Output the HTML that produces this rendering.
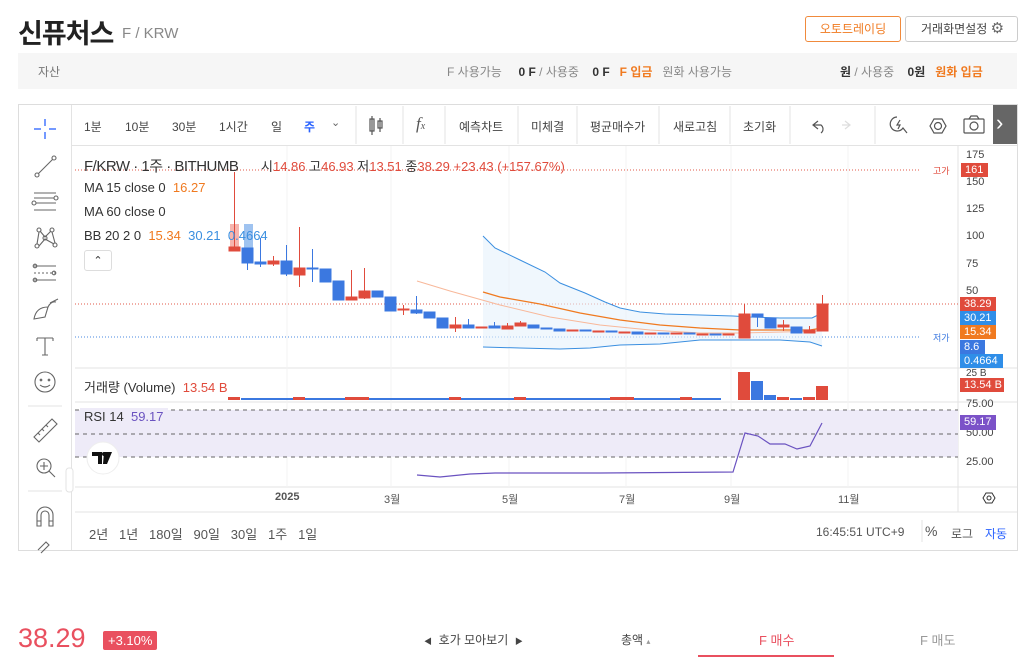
<!DOCTYPE html>
<html><head><meta charset="utf-8">
<style>
*{margin:0;padding:0;box-sizing:border-box}
body{width:1033px;height:657px;background:#fff;font-family:"Liberation Sans","Noto Sans CJK KR",sans-serif;position:relative;overflow:hidden;color:#333}
.a{position:absolute;white-space:nowrap}
</style></head><body>
<div class="a" style="left:18px;top:12px;font-size:27px;font-weight:bold;color:#222;letter-spacing:-1px">신퓨처스</div>
<div class="a" style="left:122px;top:25px;font-size:15px;color:#888">F / KRW</div>
<div class="a" style="left:805px;top:16px;width:96px;height:26px;border:1px solid #f08a3c;border-radius:3px;color:#f07a20;font-size:12px;text-align:center;line-height:24px">오토트레이딩</div>
<div class="a" style="left:905px;top:16px;width:113px;height:26px;border:1px solid #ccc;border-radius:3px;color:#444;font-size:12px;line-height:24px;padding-left:15px">거래화면설정 <span style="font-size:15px;color:#666">⚙</span></div>
<div class="a" style="left:18px;top:53px;width:999px;height:36px;background:#f6f6f6"></div>
<div class="a" style="left:38px;top:63px;font-size:12px;color:#777">자산</div>
<div class="a" style="left:447px;top:63px;font-size:12px;color:#888">F 사용가능 &nbsp;&nbsp;&nbsp;&nbsp;<b style="color:#333">0 F</b> / 사용중 &nbsp;&nbsp;&nbsp;<b style="color:#333">0 F</b> &nbsp;&nbsp;<b style="color:#f07a20">F 입금</b> &nbsp;&nbsp;원화 사용가능</div>
<div class="a" style="left:840px;top:63px;font-size:12px;color:#888"><b style="color:#333">원</b> / 사용중 &nbsp;&nbsp;&nbsp;<b style="color:#333">0원</b> &nbsp;&nbsp;<b style="color:#f07a20">원화 입금</b></div>

<div class="a" style="left:18px;top:104px;width:1000px;height:447px;border:1px solid #ddd"></div>
<div class="a" style="left:71px;top:105px;width:1px;height:445px;background:#e3e3e3"></div>
<div class="a" style="left:72px;top:145px;width:945px;height:1px;background:#e3e3e3"></div>
<div class="a" style="left:993px;top:105px;width:24px;height:39px;background:#666;color:#fff;font-size:22px;line-height:36px;padding-left:3px">›</div>
<div class="a" style="top:118px;left:84px;font-size:12px;color:#444">1분</div>
<div class="a" style="top:118px;left:125px;font-size:12px;color:#444">10분</div>
<div class="a" style="top:118px;left:172px;font-size:12px;color:#444">30분</div>
<div class="a" style="top:118px;left:219px;font-size:12px;color:#444">1시간</div>
<div class="a" style="top:118px;left:271px;font-size:12px;color:#444">일</div>
<div class="a" style="top:118px;left:304px;font-size:12px;color:#2962ff;font-weight:bold">주</div>
<div class="a" style="top:116px;left:331px;font-size:11px;color:#666">⌄</div>
<div class="a" style="top:118px;left:459px;font-size:12px;color:#444">예측차트</div>
<div class="a" style="top:118px;left:531px;font-size:12px;color:#444">미체결</div>
<div class="a" style="top:118px;left:590px;font-size:12px;color:#444">평균매수가</div>
<div class="a" style="top:118px;left:673px;font-size:12px;color:#444">새로고침</div>
<div class="a" style="top:118px;left:743px;font-size:12px;color:#444">초기화</div>
<div class="a" style="top:114px;left:416px;font-size:17px;color:#555;font-style:italic;font-family:'Liberation Serif',serif">f<span style="font-size:10px">x</span></div>

<svg class="a" style="left:0;top:0" width="1033" height="657" viewBox="0 0 1033 657">
<g stroke="#e3e3e3" stroke-width="1" fill="none">
<line x1="356" y1="106" x2="356" y2="144"/><line x1="403" y1="106" x2="403" y2="144"/><line x1="445" y1="106" x2="445" y2="144"/>
<line x1="518" y1="106" x2="518" y2="144"/><line x1="577" y1="106" x2="577" y2="144"/><line x1="659" y1="106" x2="659" y2="144"/><line x1="730" y1="106" x2="730" y2="144"/><line x1="790" y1="106" x2="790" y2="144"/><line x1="875" y1="106" x2="875" y2="144"/>
<line x1="958" y1="146" x2="958" y2="512"/>
<line x1="75" y1="368" x2="1017" y2="368"/><line x1="75" y1="402" x2="1017" y2="402"/><line x1="75" y1="487" x2="1017" y2="487"/><line x1="75" y1="512" x2="1017" y2="512"/>
<line x1="28" y1="406" x2="62" y2="406"/><line x1="28" y1="491" x2="62" y2="491"/>
</g>
<g stroke="#f3f3f3"><line x1="287" y1="146" x2="287" y2="487"/><line x1="391" y1="146" x2="391" y2="487"/><line x1="509" y1="146" x2="509" y2="487"/><line x1="626" y1="146" x2="626" y2="487"/><line x1="731" y1="146" x2="731" y2="487"/><line x1="848" y1="146" x2="848" y2="487"/></g>
<g stroke="#555" stroke-width="1.2" fill="none">
<rect x="370" y="119" width="4" height="12"/><line x1="372" y1="116" x2="372" y2="135"/><rect x="378" y="121" width="4" height="7"/><line x1="380" y1="118" x2="380" y2="132"/>
<path d="M818 121 l-5 4 l5 4 M813 125 h8 a5 5 0 0 1 0 8"/>
<path d="M897 117 a7 7 0 1 0 6 11 l4 5"/><path d="M900 120 l-3 5 h3 l-2 4"/>
<path d="M930 126 l4-7 h8 l4 7 l-4 7 h-8z"/><circle cx="938" cy="126" r="3.5"/>
<rect x="964" y="119" width="20" height="14" rx="1"/><path d="M969 119 l2-3 h6 l2 3"/><circle cx="974" cy="126" r="4"/>
</g>
<path d="M845 121 l5 4 l-5 4 M850 125 h-8" stroke="#ddd" stroke-width="1.2" fill="none"/>
<g stroke="#2962ff" stroke-width="1.3"><line x1="34" y1="129" x2="41" y2="129"/><line x1="49" y1="129" x2="56" y2="129"/><line x1="45" y1="119" x2="45" y2="126"/><line x1="45" y1="132" x2="45" y2="139"/></g>
<g stroke="#666" stroke-width="1.1" fill="none">
<circle cx="37" cy="175" r="2"/><circle cx="54" cy="158" r="2"/><line x1="38.5" y1="173.5" x2="52.5" y2="159.5"/>
<line x1="34" y1="193" x2="56" y2="193"/><line x1="34" y1="198" x2="54" y2="198"/><circle cx="56" cy="198" r="2"/><line x1="36" y1="203" x2="56" y2="203"/><circle cx="34" cy="203" r="2"/><line x1="34" y1="210" x2="56" y2="210"/>
<circle cx="39" cy="230" r="2"/><circle cx="52" cy="230" r="2"/><circle cx="37" cy="246" r="2"/><circle cx="55" cy="245" r="2"/><circle cx="45" cy="238" r="2"/><path d="M39 232 l-2 12 M52 232 l3 11 M40 231 l5 6 l6-6 M39 246 l6-7 l9 5"/>
<line x1="34" y1="266" x2="56" y2="266"/><line x1="34" y1="273" x2="56" y2="273" stroke-dasharray="2 2"/><line x1="34" y1="280" x2="56" y2="280"/><circle cx="35" cy="266" r="1.8"/><circle cx="54" cy="273" r="1.8"/><circle cx="35" cy="280" r="1.8"/>
<path d="M34 319 q2-12 14-12 l-3 10 z M48 307 q3-6 8-5 M50 303 l8 -4"/>
<path d="M37 338 h16 M45 338 v17 M37 338 v3 M53 338 v3 M42 355 h6"/>
<circle cx="45" cy="382" r="10"/><circle cx="41" cy="380" r="0.8"/><circle cx="49" cy="380" r="0.8"/><path d="M40 385 q5 4 10 0"/>
<path d="M34 437 l18-18 l5 5 l-18 18z M38 433 l2 2 M42 429 l2 2 M46 425 l2 2"/>
<circle cx="44" cy="466" r="7"/><path d="M44 462 v8 M40 466 h8 M49 471 l6 6"/>
<path d="M37 526 v-11 a8 8 0 0 1 16 0 v11 h-4 v-11 a4 4 0 0 0 -8 0 v11 z M37 521 h4 M49 521 h4"/>
<path d="M38 550 l8-8 l3 3 l-8 8"/>
</g>
<rect x="66" y="468" width="7" height="24" rx="3" fill="#fff" stroke="#e3e3e3"/>
<line x1="75" y1="170" x2="920" y2="170" stroke="#e05a4a" stroke-dasharray="1 2"/>
<line x1="75" y1="304" x2="958" y2="304" stroke="#e05a4a" stroke-dasharray="1 2"/>
<line x1="75" y1="337" x2="920" y2="337" stroke="#4a8ae0" stroke-dasharray="1 2"/>
<path d="M483 236 L495 248 L520 260 L545 272 L560 283 L585 293 L605 302 L620 308 L640 312 L665 314 L700 315 L733 316 L750 317 L780 318 L812 318 L822 313 L822 346 L810 342 L780 340 L740 340 L700 340 L660 344 L620 345 L590 348 L560 349 L520 348 L483 347 Z" fill="#e6f2fb" opacity="0.6"/>
<path d="M483 236 L495 248 L520 260 L545 272 L560 283 L585 293 L605 302 L620 308 L640 312 L665 314 L700 315 L733 316 L750 317 L780 318 L812 318 L822 313" stroke="#3b8fe0" fill="none"/>
<path d="M483 347 L520 348 L560 349 L590 348 L620 345 L660 344 L700 340 L740 340 L780 340 L810 342 L822 346" stroke="#3b8fe0" fill="none"/>
<path d="M417 281 L450 291 L500 305 L550 317 L600 325 L650 330 L700 333 L740 333 L822 331" stroke="#f8b89a" fill="none"/>
<path d="M483 292 L500 297 L540 304 L580 313 L620 320 L660 325 L700 328 L740 330 L810 330 L822 328" stroke="#f07a20" fill="none" stroke-width="1.3"/>
<rect x="230" y="224" width="9" height="26" fill="#f6b5ae"/><rect x="244" y="224" width="9" height="25" fill="#9fc3f0"/>
<g stroke-width="1">
<g stroke="#e04b3c" fill="#e04b3c">
<line x1="234.5" y1="172" x2="234.5" y2="251"/><rect x="229" y="247" width="11" height="4"/>
<line x1="273.5" y1="256" x2="273.5" y2="266"/><rect x="268" y="261" width="11" height="3"/>
<line x1="299.5" y1="227" x2="299.5" y2="287"/><rect x="294" y="268" width="11" height="7"/>
<line x1="351.5" y1="270" x2="351.5" y2="300"/><rect x="346" y="297" width="11" height="3"/>
<line x1="364.5" y1="268" x2="364.5" y2="299"/><rect x="359" y="291" width="11" height="7"/>
<line x1="403.5" y1="305" x2="403.5" y2="315"/><rect x="398" y="309" width="11" height="1"/>
<line x1="455.5" y1="317" x2="455.5" y2="332"/><rect x="450" y="325" width="11" height="3"/>
<rect x="476" y="327" width="11" height="1"/>
<line x1="507.5" y1="323" x2="507.5" y2="329"/><rect x="502" y="326" width="11" height="3"/>
<line x1="520.5" y1="321" x2="520.5" y2="326"/><rect x="515" y="323" width="11" height="3"/>
<rect x="567" y="330" width="11" height="1"/><rect x="593" y="331" width="11" height="1"/><rect x="619" y="332" width="11" height="1"/><rect x="645" y="333" width="11" height="1"/><rect x="671" y="333" width="11" height="1"/><rect x="697" y="334" width="11" height="1"/><rect x="723" y="334" width="11" height="1"/>
<line x1="744.5" y1="304" x2="744.5" y2="338"/><rect x="739" y="314" width="11" height="24"/>
<line x1="783.5" y1="320" x2="783.5" y2="331"/><rect x="778" y="325" width="11" height="2"/>
<line x1="809.5" y1="326" x2="809.5" y2="333"/><rect x="804" y="330" width="11" height="3"/>
<line x1="822.5" y1="295" x2="822.5" y2="331"/><rect x="817" y="304" width="11" height="27"/>
</g>
<g stroke="#3b78e0" fill="#3b78e0">
<line x1="247.5" y1="248" x2="247.5" y2="270"/><rect x="242" y="248" width="11" height="15"/>
<line x1="260.5" y1="238" x2="260.5" y2="267"/><rect x="255" y="262" width="11" height="2"/>
<line x1="286.5" y1="245" x2="286.5" y2="276"/><rect x="281" y="261" width="11" height="13"/>
<line x1="312.5" y1="249" x2="312.5" y2="282"/><rect x="307" y="268" width="11" height="1"/>
<rect x="320" y="269" width="11" height="13"/>
<rect x="333" y="281" width="11" height="19"/>
<rect x="372" y="291" width="11" height="6"/>
<rect x="385" y="297" width="11" height="14"/>
<line x1="416.5" y1="296" x2="416.5" y2="314"/><rect x="411" y="310" width="11" height="3"/>
<rect x="424" y="312" width="11" height="6"/>
<rect x="437" y="318" width="11" height="10"/>
<line x1="468.5" y1="319" x2="468.5" y2="328"/><rect x="463" y="325" width="11" height="3"/>
<line x1="494.5" y1="322" x2="494.5" y2="328"/><rect x="489" y="326" width="11" height="2"/>
<rect x="528" y="325" width="11" height="3"/><rect x="541" y="328" width="11" height="1"/><rect x="554" y="329" width="11" height="2"/><rect x="580" y="330" width="11" height="1"/><rect x="606" y="331" width="11" height="1"/><rect x="632" y="332" width="11" height="2"/><rect x="658" y="333" width="11" height="1"/><rect x="684" y="333" width="11" height="1"/><rect x="710" y="334" width="11" height="1"/>
<line x1="757.5" y1="314" x2="757.5" y2="327"/><rect x="752" y="314" width="11" height="3"/>
<rect x="765" y="318" width="11" height="10"/>
<rect x="791" y="327" width="11" height="6"/>
</g>
</g>
<g fill="#3b78e0"><rect x="241" y="398" width="480" height="2"/><rect x="751" y="381" width="12" height="19"/><rect x="764" y="395" width="12" height="5"/><rect x="790" y="398" width="12" height="2"/></g>
<g fill="#e04b3c"><rect x="228" y="397" width="12" height="3"/><rect x="293" y="397" width="12" height="3"/><rect x="345" y="397" width="24" height="3"/><rect x="449" y="397" width="12" height="3"/><rect x="514" y="397" width="12" height="3"/><rect x="610" y="397" width="24" height="3"/><rect x="680" y="397" width="12" height="3"/><rect x="738" y="372" width="12" height="28"/><rect x="777" y="397" width="12" height="3"/><rect x="803" y="397" width="12" height="3"/><rect x="816" y="386" width="12" height="14"/></g>
<rect x="75" y="410" width="883" height="47" fill="#eeebf8"/>
<g stroke="#666" stroke-dasharray="4 4"><line x1="75" y1="410" x2="958" y2="410"/><line x1="75" y1="434" x2="958" y2="434"/><line x1="75" y1="457" x2="958" y2="457"/></g>
<path d="M417 475 L440 477 L470 474 L495 473 L600 473 L733 472 L745 433 L758 436 L770 444 L785 444 L797 449 L810 446 L822 423" stroke="#6a52c0" fill="none" stroke-width="1.2"/>
<circle cx="103" cy="458" r="16" fill="#fff" stroke="#eee"/>
<path d="M92 452 h10 v12 h-4 v-8 h-6z M104 452 h8 l-5 12 h-4z" fill="#111"/><circle cx="104" cy="454" r="2" fill="#111"/>
<path d="M983 498 l3-5 h6 l3 5 l-3 5 h-6z" stroke="#333" fill="none"/><circle cx="989" cy="498" r="2" stroke="#333" fill="none"/>
<line x1="922" y1="520" x2="922" y2="542" stroke="#e3e3e3"/>
<rect x="698" y="655" width="136" height="2" fill="#e9505f"/>
</svg>
<div class="a" style="left:84px;top:155px;font-size:15px;letter-spacing:-0.5px;color:#333">F/KRW · 1주 · BITHUMB</div>
<div class="a" style="left:261px;top:156px;font-size:13px;color:#333">시<span style="color:#e04b3c">14.86</span> 고<span style="color:#e04b3c">46.93</span> 저<span style="color:#e04b3c">13.51</span> 종<span style="color:#e04b3c">38.29</span> <span style="color:#e04b3c">+23.43 (+157.67%)</span></div>
<div class="a" style="left:84px;top:180px;font-size:13px;color:#333">MA 15 close 0 &nbsp;<span style="color:#f07a20">16.27</span></div>
<div class="a" style="left:84px;top:204px;font-size:13px;color:#333">MA 60 close 0</div>
<div class="a" style="left:84px;top:228px;font-size:13px;color:#333">BB 20 2 0 &nbsp;<span style="color:#f07a20">15.34</span> &nbsp;<span style="color:#3b8fe0">30.21</span> &nbsp;<span style="color:#3b8fe0">0.4664</span></div>
<div class="a" style="left:84px;top:250px;width:28px;height:21px;border:1px solid #ddd;border-radius:3px;font-size:11px;text-align:center;line-height:20px">⌃</div>
<div class="a" style="left:84px;top:377px;font-size:13px;color:#333">거래량 (Volume) &nbsp;<span style="color:#e04b3c">13.54 B</span></div>
<div class="a" style="left:80px;top:408px;padding:1px 4px;background:#eeebf8;font-size:13px;color:#333">RSI 14 &nbsp;<span style="color:#6a52c0">59.17</span></div>
<div class="a" style="left:933px;top:164px;font-size:9px;color:#e04b3c">고가</div>
<div class="a" style="left:933px;top:331px;font-size:9px;color:#3b78e0">저가</div>
<div class="a" style="left:966px;top:149px;font-size:11px;color:#444;line-height:13px">175</div>
<div class="a" style="left:966px;top:176px;font-size:11px;color:#444">150</div>
<div class="a" style="left:966px;top:203px;font-size:11px;color:#444">125</div>
<div class="a" style="left:966px;top:230px;font-size:11px;color:#444">100</div>
<div class="a" style="left:966px;top:258px;font-size:11px;color:#444">75</div>
<div class="a" style="left:966px;top:285px;font-size:11px;color:#444">50</div>
<div class="a" style="left:961px;top:163px;width:27px;height:14px;background:#e04b3c;color:#fff;font-size:11px;padding-left:4px;line-height:14px">161</div>
<div class="a" style="left:960px;top:297px;width:36px;height:14px;background:#e04b3c;color:#fff;font-size:11px;padding-left:4px;line-height:14px">38.29</div>
<div class="a" style="left:960px;top:311px;width:36px;height:14px;background:#2f8ee8;color:#fff;font-size:11px;padding-left:4px;line-height:14px">30.21</div>
<div class="a" style="left:960px;top:325px;width:36px;height:14px;background:#f07a20;color:#fff;font-size:11px;padding-left:4px;line-height:14px">15.34</div>
<div class="a" style="left:960px;top:340px;width:25px;height:14px;background:#3b78e0;color:#fff;font-size:11px;padding-left:4px;line-height:14px">8.6</div>
<div class="a" style="left:960px;top:354px;width:43px;height:14px;background:#2f8ee8;color:#fff;font-size:11px;padding-left:4px;line-height:14px">0.4664</div>
<div class="a" style="left:966px;top:368px;font-size:10px;color:#444">25 B</div>
<div class="a" style="left:960px;top:378px;width:44px;height:14px;background:#e04b3c;color:#fff;font-size:11px;padding-left:4px;line-height:14px">13.54 B</div>
<div class="a" style="left:966px;top:398px;font-size:11px;color:#444">75.00</div>
<div class="a" style="left:966px;top:427px;font-size:11px;color:#444">50.00</div>
<div class="a" style="left:960px;top:415px;width:36px;height:15px;background:#7b52c8;color:#fff;font-size:11px;padding-left:4px;line-height:15px">59.17</div>
<div class="a" style="left:966px;top:456px;font-size:11px;color:#444">25.00</div>
<div class="a" style="left:275px;top:491px;font-size:11px;color:#555;font-weight:bold">2025</div>
<div class="a" style="left:384px;top:491px;font-size:11px;color:#555">3월</div>
<div class="a" style="left:502px;top:491px;font-size:11px;color:#555">5월</div>
<div class="a" style="left:619px;top:491px;font-size:11px;color:#555">7월</div>
<div class="a" style="left:724px;top:491px;font-size:11px;color:#555">9월</div>
<div class="a" style="left:838px;top:491px;font-size:11px;color:#555">11월</div>
<div class="a" style="left:89px;top:524px;font-size:13px;color:#555">2년 &nbsp; 1년 &nbsp; 180일 &nbsp; 90일 &nbsp; 30일 &nbsp; 1주 &nbsp; 1일</div>
<div class="a" style="left:816px;top:525px;font-size:12px;color:#555">16:45:51 UTC+9</div>
<div class="a" style="left:925px;top:523px;font-size:14px;color:#555">%</div>
<div class="a" style="left:951px;top:525px;font-size:12px;color:#555">로그</div>
<div class="a" style="left:985px;top:525px;font-size:12px;color:#2962ff">자동</div>
<div class="a" style="left:18px;top:623px;font-size:27px;color:#e9505f">38.29</div>
<div class="a" style="left:103px;top:631px;height:19px;padding:0 5px;background:#e9505f;color:#fff;font-size:13px;line-height:19px;border-radius:2px">+3.10%</div>
<div class="a" style="left:424px;top:631px;font-size:12px;color:#444"><span style="font-size:8px">◀</span> &nbsp;호가 모아보기 &nbsp;<span style="font-size:8px">▶</span></div>
<div class="a" style="left:621px;top:631px;font-size:12px;color:#444">총액 <span style="font-size:8px;color:#999">▴</span></div>
<div class="a" style="left:759px;top:630px;font-size:13px;color:#e9505f">F 매수</div>
<div class="a" style="left:920px;top:630px;font-size:13px;color:#999">F 매도</div>
</body></html>
